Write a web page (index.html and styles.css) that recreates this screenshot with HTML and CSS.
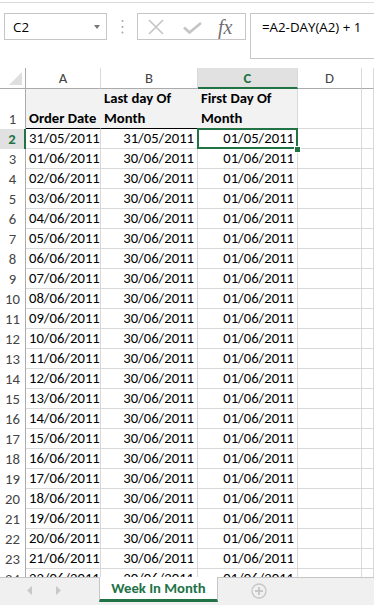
FILE: index.html
```html
<!DOCTYPE html>
<html>
<head>
<meta charset="utf-8">
<title>Week In Month</title>
<link rel="stylesheet" href="styles.css">
</head>
<body>
<div class="app">
  <div class="topline"></div>
  <div class="fbar">
    <div class="namebox"><span class="ref">C2</span><span class="caret"></span></div>
    <svg class="dots" width="3" height="16" viewBox="0 0 3 16"><circle cx="1.5" cy="2" r="1" fill="#a6a6a6"/><circle cx="1.5" cy="8" r="1" fill="#a6a6a6"/><circle cx="1.5" cy="13.5" r="1" fill="#a6a6a6"/></svg>
    <div class="fxbox">
      <svg class="ic-x" width="16" height="16" viewBox="0 0 16 16"><path d="M1 1 L15 15 M15 1 L1 15" stroke="#c4c4c4" stroke-width="1.6" fill="none"/></svg>
      <svg class="ic-check" width="19" height="12" viewBox="0 0 19 12"><path d="M1 5.5 L6.5 10.5 L18 1" stroke="#c4c4c4" stroke-width="2.6" fill="none"/></svg>
      <span class="fx">fx</span>
    </div>
    <div class="formula">=A2-DAY(A2) + 1</div>
  </div>
  <div class="sheet">
    <div class="grid">
      <div class="ch corner"><svg width="26" height="20" viewBox="0 0 26 20"><path d="M22 4 L22 17 L9 17 Z" fill="#dfdfdf"/></svg></div>
      <div class="ch">A</div><div class="ch">B</div><div class="ch sel">C</div><div class="ch">D</div><div class="ch"></div>

      <div class="rh">1</div><div class="c hd">Order Date</div><div class="c hd">Last day Of<br>Month</div><div class="c hd hdl">First Day Of<br>Month</div><div class="c"></div><div class="c"></div>
      <div class="rh sel">2</div><div class="c">31/05/2011</div><div class="c r">31/05/2011</div><div class="c r active">01/05/2011</div><div class="c"></div><div class="c"></div>
      <div class="rh">3</div><div class="c">01/06/2011</div><div class="c r">30/06/2011</div><div class="c r">01/06/2011</div><div class="c"></div><div class="c"></div>
      <div class="rh">4</div><div class="c">02/06/2011</div><div class="c r">30/06/2011</div><div class="c r">01/06/2011</div><div class="c"></div><div class="c"></div>
      <div class="rh">5</div><div class="c">03/06/2011</div><div class="c r">30/06/2011</div><div class="c r">01/06/2011</div><div class="c"></div><div class="c"></div>
      <div class="rh">6</div><div class="c">04/06/2011</div><div class="c r">30/06/2011</div><div class="c r">01/06/2011</div><div class="c"></div><div class="c"></div>
      <div class="rh">7</div><div class="c">05/06/2011</div><div class="c r">30/06/2011</div><div class="c r">01/06/2011</div><div class="c"></div><div class="c"></div>
      <div class="rh">8</div><div class="c">06/06/2011</div><div class="c r">30/06/2011</div><div class="c r">01/06/2011</div><div class="c"></div><div class="c"></div>
      <div class="rh">9</div><div class="c">07/06/2011</div><div class="c r">30/06/2011</div><div class="c r">01/06/2011</div><div class="c"></div><div class="c"></div>
      <div class="rh">10</div><div class="c">08/06/2011</div><div class="c r">30/06/2011</div><div class="c r">01/06/2011</div><div class="c"></div><div class="c"></div>
      <div class="rh">11</div><div class="c">09/06/2011</div><div class="c r">30/06/2011</div><div class="c r">01/06/2011</div><div class="c"></div><div class="c"></div>
      <div class="rh">12</div><div class="c">10/06/2011</div><div class="c r">30/06/2011</div><div class="c r">01/06/2011</div><div class="c"></div><div class="c"></div>
      <div class="rh">13</div><div class="c">11/06/2011</div><div class="c r">30/06/2011</div><div class="c r">01/06/2011</div><div class="c"></div><div class="c"></div>
      <div class="rh">14</div><div class="c">12/06/2011</div><div class="c r">30/06/2011</div><div class="c r">01/06/2011</div><div class="c"></div><div class="c"></div>
      <div class="rh">15</div><div class="c">13/06/2011</div><div class="c r">30/06/2011</div><div class="c r">01/06/2011</div><div class="c"></div><div class="c"></div>
      <div class="rh">16</div><div class="c">14/06/2011</div><div class="c r">30/06/2011</div><div class="c r">01/06/2011</div><div class="c"></div><div class="c"></div>
      <div class="rh">17</div><div class="c">15/06/2011</div><div class="c r">30/06/2011</div><div class="c r">01/06/2011</div><div class="c"></div><div class="c"></div>
      <div class="rh">18</div><div class="c">16/06/2011</div><div class="c r">30/06/2011</div><div class="c r">01/06/2011</div><div class="c"></div><div class="c"></div>
      <div class="rh">19</div><div class="c">17/06/2011</div><div class="c r">30/06/2011</div><div class="c r">01/06/2011</div><div class="c"></div><div class="c"></div>
      <div class="rh">20</div><div class="c">18/06/2011</div><div class="c r">30/06/2011</div><div class="c r">01/06/2011</div><div class="c"></div><div class="c"></div>
      <div class="rh">21</div><div class="c">19/06/2011</div><div class="c r">30/06/2011</div><div class="c r">01/06/2011</div><div class="c"></div><div class="c"></div>
      <div class="rh">22</div><div class="c">20/06/2011</div><div class="c r">30/06/2011</div><div class="c r">01/06/2011</div><div class="c"></div><div class="c"></div>
      <div class="rh">23</div><div class="c">21/06/2011</div><div class="c r">30/06/2011</div><div class="c r">01/06/2011</div><div class="c"></div><div class="c"></div>
      <div class="rh">24</div><div class="c">22/06/2011</div><div class="c r">30/06/2011</div><div class="c r">01/06/2011</div><div class="c"></div><div class="c"></div>
    </div>
  </div>
  <div class="tabbar">
    <div class="nav">
      <svg width="5" height="9" viewBox="0 0 5 9"><path d="M5 0 L0 4.5 L5 9 Z" fill="#c8c8c8"/></svg>
      <svg width="5" height="9" viewBox="0 0 5 9"><path d="M0 0 L5 4.5 L0 9 Z" fill="#c8c8c8"/></svg>
    </div>
    <div class="tab">Week In Month</div>
    <svg class="plus" width="16" height="16" viewBox="0 0 16 16"><circle cx="8" cy="8" r="7" fill="none" stroke="#c6c6c6" stroke-width="1.3"/><path d="M8 4 V12 M4 8 H12" stroke="#c6c6c6" stroke-width="1.8"/></svg>
  </div>
</div>
</body>
</html>
```

FILE: styles.css
```css
* { box-sizing: border-box; }
html, body { margin: 0; padding: 0; background: #fff; }
body {
  width: 374px;
  height: 605px;
  overflow: hidden;
  font-family: "Carlito", "Liberation Sans", sans-serif;
  font-size: 14.67px;
  color: #000;
}
.app { display: flex; flex-direction: column; height: 605px; }
.topline { flex: none; height: 3px; border-bottom: 1px solid #dcdcdc; }

.fbar {
  flex: none;
  height: 65px;
  display: flex;
  align-items: flex-start;
  padding-top: 10px;
  font-family: "Open Sans", sans-serif;
  font-size: 13.3px;
}
.namebox {
  margin-left: 4px;
  width: 103px;
  height: 27px;
  border: 1px solid #c6c6c6;
  display: flex;
  align-items: center;
  justify-content: space-between;
  padding: 0 6px 0 8px;
}
.caret {
  width: 0; height: 0;
  border-left: 3.5px solid transparent;
  border-right: 3.5px solid transparent;
  border-top: 4px solid #777;
}
.dots { margin: 6px 0 0 14px; flex: none; }
.fxbox {
  margin-left: 13px;
  width: 109px;
  height: 27px;
  border: 1px solid #c6c6c6;
  display: flex;
  align-items: center;
  padding-left: 10px;
}
.ic-check { margin-left: 19px; margin-top: 3px; }
.fx {
  margin-left: 16px;
  font-family: "Liberation Serif", serif;
  font-style: italic;
  font-size: 20px;
  color: #707070;
  line-height: 20px;
}
.formula {
  margin-left: 4px;
  flex: 1;
  height: 46px;
  border: 1px solid #c6c6c6;
  border-right: none;
  padding: 4px 0 0 11px;
  line-height: 19px;
}

.sheet { flex: none; height: 509px; overflow: hidden; }
.grid {
  display: grid;
  grid-template-columns: 26px 75px 97px 100px 64px 12px;
  grid-template-rows: 21px 40px;
  grid-auto-rows: 20px;
}
.ch {
  border-right: 1px solid #d9d9d9;
  border-bottom: 1px solid #ababab;
  text-align: center;
  color: #444;
  line-height: 20px;
}
.ch.corner { border-right-color: #ababab; }
.ch.corner svg { display: block; }
.ch.sel {
  background: #e1e1e1;
  border-bottom: 2px solid #217346;
  color: #217346;
  font-weight: bold;
}
.rh {
  border-right: 1px solid #ababab;
  color: #444;
  display: flex;
  align-items: flex-end;
  justify-content: center;
  line-height: 19px;
}
.rh.sel {
  background: #e1e1e1;
  border-right: 2px solid #217346;
  color: #217346;
  font-weight: bold;
}
.c {
  border-right: 1px solid #d9d9d9;
  border-bottom: 1px solid #d9d9d9;
  padding: 0 3px;
  line-height: 19px;
  white-space: nowrap;
  overflow: hidden;
}
.r { text-align: right; }
.hd {
  background: #f2f2f2;
  font-weight: bold;
  display: flex;
  flex-direction: column;
  justify-content: flex-end;
  line-height: 20px;
  border-right-color: #f2f2f2;
  border-bottom-color: #000;
}
.hd.hdl { border-right-color: #d9d9d9; }
.active { position: relative; overflow: visible; }
.active::after {
  content: "";
  position: absolute;
  top: -1px; left: -1px; right: -1px; bottom: -1px;
  border: 2px solid #217346;
  z-index: 2;
}
.active::before {
  content: "";
  position: absolute;
  right: -3px; bottom: -4px;
  width: 5px; height: 5px;
  background: #217346;
  box-shadow: 0 0 0 1px #fff;
  z-index: 3;
}

.tabbar {
  flex: 1;
  background: #f0f0f0;
  border-top: 1px solid #c6c6c6;
  display: flex;
  align-items: flex-start;
}
.nav { width: 99px; display: flex; gap: 24px; padding: 8px 0 0 27px; }
.nav svg { display: block; }
.tab {
  margin-top: -1px;
  width: 119px;
  height: 25px;
  background: #fff;
  border-left: 1px solid #c6c6c6;
  border-right: 1px solid #c6c6c6;
  border-bottom: 3px solid #217346;
  text-align: center;
  font-weight: bold;
  color: #217346;
  line-height: 22px;
}
.plus { margin: 5px 0 0 33px; }
```
